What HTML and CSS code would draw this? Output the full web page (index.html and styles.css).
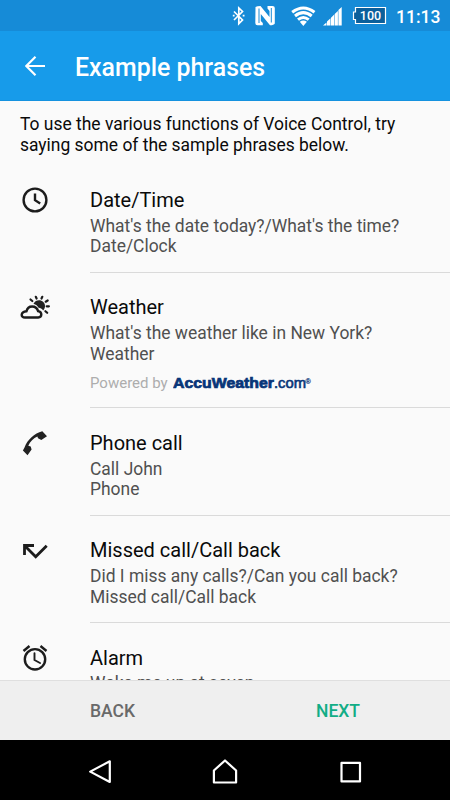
FILE: index.html
```html
<!DOCTYPE html>
<html lang="en">
<head>
<meta charset="utf-8">
<title>Example phrases</title>
<link rel="stylesheet" href="styles.css">
</head>
<body>
<div class="screen">
  <div class="status">
    <svg class="status-icons" width="170" height="31" viewBox="220 0 170 31" fill="none">
      <path d="M234 11.500L242.500 20L238.800 23.700V8L242.500 11.500L234 20" stroke="#fff" stroke-width="1.700"/>
      <path d="M232.800 15.700h1.800M242.700 15.700h1.800" stroke="#fff" stroke-width="1.700"/>
      <path d="M255.500 7Q257 6 260.500 6L269.500 17V11L267.500 8.500V6H272.500Q274.800 6 274.800 8V23.500Q274 25.300 270 25.300L260.800 14V21L262.800 23V25.300H257.500Q255.300 25.300 255.300 23Z" fill="#fff"/>
      <path d="M259 8.500V23M271.300 8V22.500" stroke="#168bd7" stroke-width="1"/>
      <g stroke="#fff" stroke-width="3">
        <path d="M292.200 12.300Q303.300 3.700 314.500 12.300"/>
        <path d="M295 16Q303.300 9.300 311.700 16"/>
        <path d="M298 19.700Q303.300 15.300 308.700 19.700"/>
      </g>
      <path d="M299.800 21.800Q303.300 19 306.900 21.800L303.300 26Z" fill="#fff"/>
      <path d="M323 25.500L326.500 22.500V25.500ZM327 25.500V21.500L330.500 18.300V25.500ZM331 25.500V17.800L334.200 14.600V25.500ZM334.700 25.500V14L337.900 11V25.500ZM338.400 25.500V10L341.700 7V25.500Z" fill="#fff"/>
      <path d="M355.500 7.500H385.500V23.500H355.500V19.500H353.500V12H355.500Z" fill="#0b5f9b" stroke="#fff" stroke-width="1.200"/>
      <text class="battery" x="370.500" y="19.800" text-anchor="middle">100</text>
    </svg>
    <span class="clock">11:13</span>
  </div>
  <header class="bar">
    <svg class="back-arrow" width="20" height="20" viewBox="0 0 20 20"><path d="M20 10H1.500M10.500 .800L1.300 10L10.500 19.200" fill="none" stroke="#fff" stroke-width="2.200"/></svg>
    <h1>Example phrases</h1>
  </header>
  <main class="content">
    <p class="intro">To use the various functions of Voice Control, try<br>saying some of the sample phrases below.</p>
    <section class="row">
      <svg class="icon" viewBox="0 0 30 30"><circle cx="15" cy="15" r="11.400"/><path d="M15 8.500V15.200L20.200 18.600"/></svg>
      <div class="info">
        <h2>Date/Time</h2>
        <p>What's the date today?/What's the time?<br>Date/Clock</p>
      </div>
    </section>
    <section class="row">
      <svg class="icon" viewBox="0 0 30 30">
        <path class="solid" d="M13.500 10.700C15.500 6.800 20.500 6.300 23.300 9C25.800 11.500 25.500 15.300 23.200 17.400C21.800 15.800 20.500 15 18.600 14.800C17.500 12.800 16 11.500 13.500 10.700Z"/>
        <path class="ray" d="M15.800 3.800L16.600 5.500M22.300 3.800L21.500 5.500M10.500 6.500L12.300 8M27.700 7.500L25.700 8.700M26.700 13.300H28.900M25.400 18.200L27.200 19.800"/>
        <path d="M5 24.500H18.200C22.200 24.500 22.500 18.800 18.100 18.100C16.300 11.900 7.900 11.800 6.500 18.200C.300 18.900 .400 24.500 5 24.500Z"/>
      </svg>
      <div class="info">
        <h2>Weather</h2>
        <p>What's the weather like in New York?<br>Weather</p>
        <div class="powered"><span>Powered by</span>
          <svg class="accu" width="140" height="18" viewBox="0 0 140 18"><text x="0" y="13.500" textLength="101" lengthAdjust="spacingAndGlyphs" class="accu-bold">AccuWeather</text><text x="101" y="13.500" textLength="32" lengthAdjust="spacingAndGlyphs" class="accu-com">.com</text><text x="132.500" y="9.500" class="accu-mark">®</text></svg>
        </div>
      </div>
    </section>
    <section class="row">
      <svg class="icon" viewBox="0 0 30 30"><path class="solid" d="M2.900 22.500L4.500 19.500C7.500 11.500 14.300 5.500 22.300 3.300L27 8.200L21.300 11.900L18 10.300L17.400 8.600C13.500 10.300 10 13.800 8.300 17.700L10.700 18.400L11.600 21.600L7.500 27.300Z"/></svg>
      <div class="info">
        <h2>Phone call</h2>
        <p>Call John<br>Phone</p>
      </div>
    </section>
    <section class="row">
      <svg class="icon" viewBox="0 0 30 30"><path d="M14 9.500H4.500V19M4.500 9.500L15.700 20.800L26.700 9.800" stroke-width="2.800"/></svg>
      <div class="info">
        <h2>Missed call/Call back</h2>
        <p>Did I miss any calls?/Can you call back?<br>Missed call/Call back</p>
      </div>
    </section>
    <section class="row">
      <svg class="icon" viewBox="0 0 30 30"><circle cx="15" cy="16.300" r="10.200"/><path class="hands" d="M14.500 10.300V17L20 20"/><path d="M3.500 8L9.500 3M20.500 3L26.500 8"/></svg>
      <div class="info">
        <h2>Alarm</h2>
        <p>Wake me up at seven</p>
      </div>
    </section>
  </main>
  <footer class="actions">
    <span class="back">BACK</span>
    <span class="next">NEXT</span>
  </footer>
  <nav class="nav">
    <svg width="26" height="26" viewBox="0 0 26 26"><path d="M22.800 2.300V23L3.200 12.600Z"/></svg>
    <svg width="26" height="26" viewBox="0 0 26 26"><path d="M1.900 23.500V11.500L13 1.500L24.100 11.500V23.500Z"/></svg>
    <svg width="26" height="26" viewBox="0 0 26 26"><rect x="4.500" y="3.900" width="18.500" height="18.500"/></svg>
  </nav>
</div>
</body>
</html>
```

FILE: styles.css
```css
* { box-sizing: border-box; margin: 0; padding: 0; }
body { font-family: Roboto, sans-serif; background: #000; }
.screen { width: 450px; height: 800px; display: flex; flex-direction: column; overflow: hidden; }
.status { height: 31px; flex: none; background: #168bd7; display: flex; justify-content: flex-end; align-items: center; padding-right: 10px; color: #fff; }
.status-icons { flex: none; margin-right: 6px; }
.battery { font: 500 12.500px Roboto, sans-serif; fill: #fff; }
.clock { width: 44px; font-size: 17.500px; font-weight: 500; line-height: 20px; padding-top: 2px; white-space: nowrap; }
.bar { height: 70px; flex: none; background: #179bea; border-bottom: 1px solid #1592df; display: flex; align-items: center; padding: 1px 0 0 25px; color: #fff; }
.back-arrow { margin-right: 30px; }
h1 { font-size: 24.900px; font-weight: 500; line-height: 30px; padding-top: 3px; }
.content { flex: 1; min-height: 0; overflow: hidden; background: #fafafa; }
.intro { padding: 13px 20px 0; height: 64px; font-size: 17.460px; line-height: 20.500px; color: #0a0a0a; white-space: nowrap; }
.row { display: flex; padding: 20px 0 0 20px; }
.icon { width: 30px; height: 30px; flex: none; margin-right: 40px; fill: none; stroke: #1c1c1c; stroke-width: 2.400; }
.icon .solid { fill: #222; stroke: none; }
.icon .ray, .icon .hands { stroke-width: 1.900; stroke-linecap: round; }
.icon .ray { stroke-width: 2.200; }
.info { flex: 1; padding: 3.500px 0 15px; border-bottom: 1px solid #dadada; white-space: nowrap; }
h2 { font-size: 20px; font-weight: 400; line-height: 23.500px; color: #0a0a0a; }
.info p { margin-top: 3.500px; font-size: 17.460px; line-height: 20.500px; color: #505050; }
.row:last-child p { margin-top: 2.500px; }
.powered { display: flex; align-items: center; height: 18px; margin-top: 10px; font-size: 15px; color: #adadad; }
.accu { margin-left: 5px; fill: #073578; font-family: "Liberation Sans", sans-serif; }
.accu-bold { font-size: 14.500px; font-weight: 700; stroke: #073578; stroke-width: .700px; }
.accu-com { font-size: 14.500px; stroke: #073578; stroke-width: .600px; }
.accu-mark { font-size: 7px; stroke: #073578; stroke-width: .200px; }
.actions { height: 60px; flex: none; background: #efefef; border-top: 1px solid #dfdfdf; display: flex; justify-content: space-between; align-items: center; padding: 0 90px; font-size: 17.500px; font-weight: 500; }
.back { color: #696969; }
.next { color: #12ad86; }
.nav { height: 60px; flex: none; background: #000; display: flex; align-items: center; justify-content: space-between; padding: 3px 87px 0; }
.nav path, .nav rect { fill: none; stroke: #fff; stroke-width: 2.200; stroke-linejoin: round; }
```
